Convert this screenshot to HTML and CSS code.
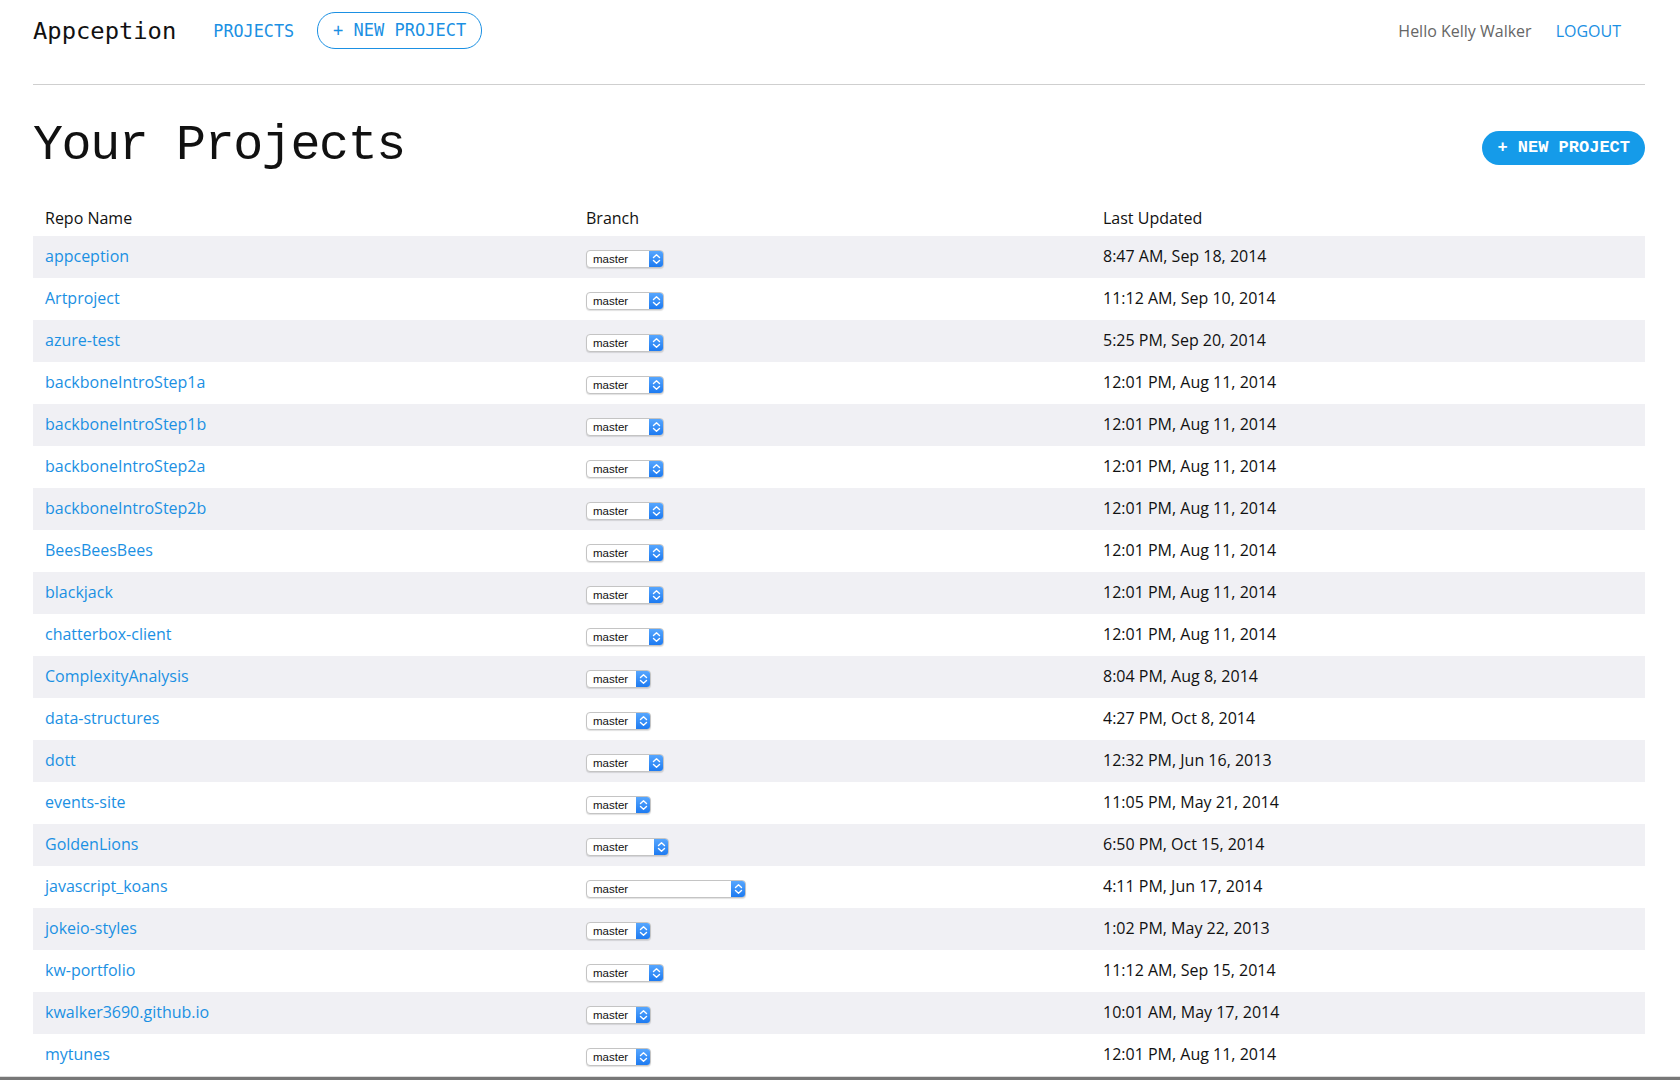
FILE: index.html
```html
<!DOCTYPE html>
<html lang="en">
<head>
<meta charset="utf-8">
<title>Appception - Your Projects</title>
<link rel="stylesheet" href="styles.css">
</head>
<body>
<div class="page">
  <header class="topbar">
    <div class="brand">Appception</div>
    <a class="nav-link" href="#">PROJECTS</a>
    <a class="nav-btn" href="#">+ NEW PROJECT</a>
    <div class="spacer"></div>
    <span class="hello">Hello Kelly Walker</span>
    <a class="logout" href="#">LOGOUT</a>
  </header>

  <div class="title-row">
    <h1 class="title">Your Projects</h1>
    <a class="new-btn" href="#">+ NEW PROJECT</a>
  </div>

  <table class="projects">
    <colgroup>
      <col class="c-name">
      <col class="c-branch">
      <col class="c-date">
    </colgroup>
    <thead>
      <tr><th>Repo Name</th><th>Branch</th><th>Last Updated</th></tr>
    </thead>
    <tbody>
      <tr><td><a href="#">appception</a></td><td><span class="sel sel-md"><span class="val">master</span><span class="arr"><svg viewBox="0 0 15 18" width="15" height="18"><path d="M4.5 7.5 7.5 4.8 10.5 7.5M4.5 10.5 7.5 13.2 10.5 10.5"/></svg></span></span></td><td>8:47 AM, Sep 18, 2014</td></tr>
      <tr><td><a href="#">Artproject</a></td><td><span class="sel sel-md"><span class="val">master</span><span class="arr"><svg viewBox="0 0 15 18" width="15" height="18"><path d="M4.5 7.5 7.5 4.8 10.5 7.5M4.5 10.5 7.5 13.2 10.5 10.5"/></svg></span></span></td><td>11:12 AM, Sep 10, 2014</td></tr>
      <tr><td><a href="#">azure-test</a></td><td><span class="sel sel-md"><span class="val">master</span><span class="arr"><svg viewBox="0 0 15 18" width="15" height="18"><path d="M4.5 7.5 7.5 4.8 10.5 7.5M4.5 10.5 7.5 13.2 10.5 10.5"/></svg></span></span></td><td>5:25 PM, Sep 20, 2014</td></tr>
      <tr><td><a href="#">backboneIntroStep1a</a></td><td><span class="sel sel-md"><span class="val">master</span><span class="arr"><svg viewBox="0 0 15 18" width="15" height="18"><path d="M4.5 7.5 7.5 4.8 10.5 7.5M4.5 10.5 7.5 13.2 10.5 10.5"/></svg></span></span></td><td>12:01 PM, Aug 11, 2014</td></tr>
      <tr><td><a href="#">backboneIntroStep1b</a></td><td><span class="sel sel-md"><span class="val">master</span><span class="arr"><svg viewBox="0 0 15 18" width="15" height="18"><path d="M4.5 7.5 7.5 4.8 10.5 7.5M4.5 10.5 7.5 13.2 10.5 10.5"/></svg></span></span></td><td>12:01 PM, Aug 11, 2014</td></tr>
      <tr><td><a href="#">backboneIntroStep2a</a></td><td><span class="sel sel-md"><span class="val">master</span><span class="arr"><svg viewBox="0 0 15 18" width="15" height="18"><path d="M4.5 7.5 7.5 4.8 10.5 7.5M4.5 10.5 7.5 13.2 10.5 10.5"/></svg></span></span></td><td>12:01 PM, Aug 11, 2014</td></tr>
      <tr><td><a href="#">backboneIntroStep2b</a></td><td><span class="sel sel-md"><span class="val">master</span><span class="arr"><svg viewBox="0 0 15 18" width="15" height="18"><path d="M4.5 7.5 7.5 4.8 10.5 7.5M4.5 10.5 7.5 13.2 10.5 10.5"/></svg></span></span></td><td>12:01 PM, Aug 11, 2014</td></tr>
      <tr><td><a href="#">BeesBeesBees</a></td><td><span class="sel sel-md"><span class="val">master</span><span class="arr"><svg viewBox="0 0 15 18" width="15" height="18"><path d="M4.5 7.5 7.5 4.8 10.5 7.5M4.5 10.5 7.5 13.2 10.5 10.5"/></svg></span></span></td><td>12:01 PM, Aug 11, 2014</td></tr>
      <tr><td><a href="#">blackjack</a></td><td><span class="sel sel-md"><span class="val">master</span><span class="arr"><svg viewBox="0 0 15 18" width="15" height="18"><path d="M4.5 7.5 7.5 4.8 10.5 7.5M4.5 10.5 7.5 13.2 10.5 10.5"/></svg></span></span></td><td>12:01 PM, Aug 11, 2014</td></tr>
      <tr><td><a href="#">chatterbox-client</a></td><td><span class="sel sel-md"><span class="val">master</span><span class="arr"><svg viewBox="0 0 15 18" width="15" height="18"><path d="M4.5 7.5 7.5 4.8 10.5 7.5M4.5 10.5 7.5 13.2 10.5 10.5"/></svg></span></span></td><td>12:01 PM, Aug 11, 2014</td></tr>
      <tr><td><a href="#">ComplexityAnalysis</a></td><td><span class="sel sel-sm"><span class="val">master</span><span class="arr"><svg viewBox="0 0 15 18" width="15" height="18"><path d="M4.5 7.5 7.5 4.8 10.5 7.5M4.5 10.5 7.5 13.2 10.5 10.5"/></svg></span></span></td><td>8:04 PM, Aug 8, 2014</td></tr>
      <tr><td><a href="#">data-structures</a></td><td><span class="sel sel-sm"><span class="val">master</span><span class="arr"><svg viewBox="0 0 15 18" width="15" height="18"><path d="M4.5 7.5 7.5 4.8 10.5 7.5M4.5 10.5 7.5 13.2 10.5 10.5"/></svg></span></span></td><td>4:27 PM, Oct 8, 2014</td></tr>
      <tr><td><a href="#">dott</a></td><td><span class="sel sel-md"><span class="val">master</span><span class="arr"><svg viewBox="0 0 15 18" width="15" height="18"><path d="M4.5 7.5 7.5 4.8 10.5 7.5M4.5 10.5 7.5 13.2 10.5 10.5"/></svg></span></span></td><td>12:32 PM, Jun 16, 2013</td></tr>
      <tr><td><a href="#">events-site</a></td><td><span class="sel sel-sm"><span class="val">master</span><span class="arr"><svg viewBox="0 0 15 18" width="15" height="18"><path d="M4.5 7.5 7.5 4.8 10.5 7.5M4.5 10.5 7.5 13.2 10.5 10.5"/></svg></span></span></td><td>11:05 PM, May 21, 2014</td></tr>
      <tr><td><a href="#">GoldenLions</a></td><td><span class="sel sel-lg"><span class="val">master</span><span class="arr"><svg viewBox="0 0 15 18" width="15" height="18"><path d="M4.5 7.5 7.5 4.8 10.5 7.5M4.5 10.5 7.5 13.2 10.5 10.5"/></svg></span></span></td><td>6:50 PM, Oct 15, 2014</td></tr>
      <tr><td><a href="#">javascript_koans</a></td><td><span class="sel sel-xl"><span class="val">master</span><span class="arr"><svg viewBox="0 0 15 18" width="15" height="18"><path d="M4.5 7.5 7.5 4.8 10.5 7.5M4.5 10.5 7.5 13.2 10.5 10.5"/></svg></span></span></td><td>4:11 PM, Jun 17, 2014</td></tr>
      <tr><td><a href="#">jokeio-styles</a></td><td><span class="sel sel-sm"><span class="val">master</span><span class="arr"><svg viewBox="0 0 15 18" width="15" height="18"><path d="M4.5 7.5 7.5 4.8 10.5 7.5M4.5 10.5 7.5 13.2 10.5 10.5"/></svg></span></span></td><td>1:02 PM, May 22, 2013</td></tr>
      <tr><td><a href="#">kw-portfolio</a></td><td><span class="sel sel-md"><span class="val">master</span><span class="arr"><svg viewBox="0 0 15 18" width="15" height="18"><path d="M4.5 7.5 7.5 4.8 10.5 7.5M4.5 10.5 7.5 13.2 10.5 10.5"/></svg></span></span></td><td>11:12 AM, Sep 15, 2014</td></tr>
      <tr><td><a href="#">kwalker3690.github.io</a></td><td><span class="sel sel-sm"><span class="val">master</span><span class="arr"><svg viewBox="0 0 15 18" width="15" height="18"><path d="M4.5 7.5 7.5 4.8 10.5 7.5M4.5 10.5 7.5 13.2 10.5 10.5"/></svg></span></span></td><td>10:01 AM, May 17, 2014</td></tr>
      <tr><td><a href="#">mytunes</a></td><td><span class="sel sel-sm"><span class="val">master</span><span class="arr"><svg viewBox="0 0 15 18" width="15" height="18"><path d="M4.5 7.5 7.5 4.8 10.5 7.5M4.5 10.5 7.5 13.2 10.5 10.5"/></svg></span></span></td><td>12:01 PM, Aug 11, 2014</td></tr>
    </tbody>
  </table>
</div>
<div class="bottom-strip"></div>
</body>
</html>
```

FILE: styles.css
```css
html, body {
  margin: 0;
  padding: 0;
  background: #ffffff;
}

body {
  font-family: "Open Sans", "Noto Sans", sans-serif;
  color: #111;
  overflow: hidden;
}

a {
  text-decoration: none;
}

.page {
  padding: 0 35px 0 33px;
}

/* ---------- top bar ---------- */
.topbar {
  display: flex;
  align-items: center;
  padding: 12px 0 35px;
  border-bottom: 1px solid #cfcfcf;
}

.brand {
  font-family: "DejaVu Sans Mono", "Liberation Mono", monospace;
  font-size: 23.8px;
  color: #111;
  margin-right: 37px;
}

.nav-link {
  font-family: "DejaVu Sans Mono", "Liberation Mono", monospace;
  font-size: 16.8px;
  color: #1b90e3;
  margin-right: 23px;
}

.nav-btn {
  font-family: "DejaVu Sans Mono", "Liberation Mono", monospace;
  font-size: 17px;
  color: #1b90e3;
  height: 35px;
  line-height: 35px;
  padding: 0 15px;
  border: 1px solid #1b90e3;
  border-radius: 18px;
}

.spacer {
  flex: 1;
}

.hello {
  font-size: 16px;
  color: #666;
  margin-right: 24px;
}

.logout {
  font-size: 16px;
  color: #1b90e3;
  margin-right: 24px;
}

/* ---------- title ---------- */
.title-row {
  display: flex;
  align-items: center;
  justify-content: space-between;
  padding-top: 13px;
  height: 102px;
}

.title {
  margin: 0 0 6px;
  font-family: "Liberation Mono", "DejaVu Sans Mono", monospace;
  font-weight: normal;
  font-size: 50px;
  letter-spacing: -1.4px;
  line-height: 60px;
  color: #111;
}

.new-btn {
  font-family: "Liberation Mono", "DejaVu Sans Mono", monospace;
  font-weight: bold;
  font-size: 17px;
  color: #fff;
  background: #159be9;
  height: 34px;
  line-height: 34px;
  padding: 0 15px;
  border-radius: 17px;
  margin-bottom: 2px;
}

/* ---------- table ---------- */
.projects {
  width: 100%;
  border-collapse: collapse;
  table-layout: fixed;
  font-size: 16px;
}

.c-name { width: 541px; }
.c-branch { width: 517px; }

.projects th {
  text-align: left;
  font-weight: normal;
  color: #111;
  height: 36px;
  padding: 0 12px;
  vertical-align: middle;
}

.projects td {
  height: 40px;
  padding: 0 12px 2px;
  vertical-align: middle;
  color: #111;
}

.projects tbody tr:nth-child(odd) {
  background: #f0f0f4;
}

.projects td a {
  color: #1b90e3;
}

/* mac-style select */
.sel {
  display: inline-flex;
  align-items: stretch;
  height: 18px;
  box-sizing: border-box;
  border: 1px solid #c4c4c4;
  border-radius: 4px;
  background: #fff;
  box-shadow: 0 1px 1px rgba(0, 0, 0, 0.12);
  overflow: hidden;
  vertical-align: middle;
  margin-top: 4px;
}

.sel-sm { width: 65px; }
.sel-md { width: 78px; }
.sel-lg { width: 83px; }
.sel-xl { width: 160px; }

.sel .val {
  flex: 1;
  font-family: "Liberation Sans", Arial, sans-serif;
  font-size: 11.5px;
  line-height: 16px;
  padding-left: 6px;
  color: #111;
}

.sel .arr {
  width: 15px;
  background: linear-gradient(#5aa9ff, #1a78f0);
  display: flex;
  align-items: center;
  justify-content: center;
  margin: -1px -1px -1px 0;
}

.sel .arr svg {
  display: block;
  height: 18px;
}

.sel .arr path {
  fill: none;
  stroke: #fff;
  stroke-width: 1.4;
  stroke-linecap: round;
  stroke-linejoin: round;
}

.bottom-strip {
  position: fixed;
  left: 0;
  right: 0;
  bottom: 0;
  height: 3px;
  background: #777;
  border-top: 1px solid #ddd;
}
```
